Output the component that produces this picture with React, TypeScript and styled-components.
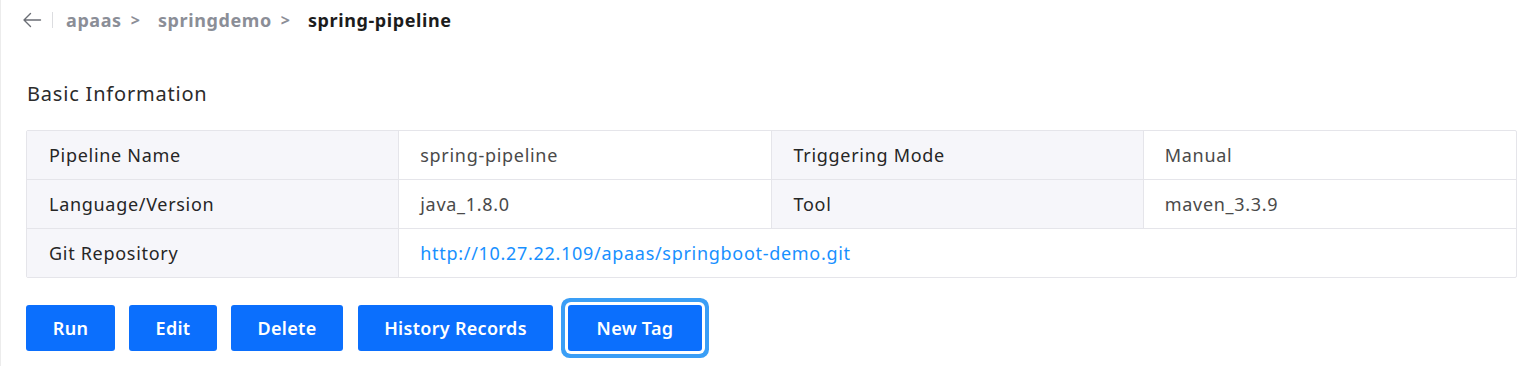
import styled, { createGlobalStyle } from 'styled-components';

const GlobalStyle = createGlobalStyle`
  html, body {
    margin: 0;
    padding: 0;
    background: #fff;
  }
  body {
    font-family: "Noto Sans", "Open Sans", sans-serif;
  }
`

type Row = {
  label: string;
  value: string;
  label2?: string;
  value2?: string;
  link?: boolean;
}

const rows: Row[] = [
  { label: 'Pipeline Name', value: 'spring-pipeline', label2: 'Triggering Mode', value2: 'Manual' },
  { label: 'Language/Version', value: 'java_1.8.0', label2: 'Tool', value2: 'maven_3.3.9' },
  { label: 'Git Repository', value: 'http://10.27.22.109/apaas/springboot-demo.git', link: true },
]

const buttons = [
  { text: 'Run', width: 89 },
  { text: 'Edit', width: 88 },
  { text: 'Delete', width: 112 },
  { text: 'History Records', width: 195, shift: 1 },
  { text: 'New Tag', width: 134, shift: 1, focused: true },
]

export default function App() {
  return (
    <Page>
      <GlobalStyle />
      <Crumbs>
        <BackButton aria-label="back">
          <svg width="20" height="16" viewBox="0 0 20 16" fill="none">
            <path d="M18.5 8H2M8.5 1.5L2 8L8.5 14.5" stroke="#6b6e75" strokeWidth="1.4" strokeLinecap="round" strokeLinejoin="round" />
          </svg>
        </BackButton>
        <Divider />
        <Crumb>apaas</Crumb>
        <Chevron>&gt;</Chevron>
        <Crumb>springdemo</Crumb>
        <Chevron>&gt;</Chevron>
        <Crumb $current>spring-pipeline</Crumb>
      </Crumbs>

      <SectionTitle>Basic Information</SectionTitle>

      <InfoTable>
        {rows.map((r, i) => (
          <InfoRow key={r.label} $last={i === rows.length - 1}>
            <LabelCell>{r.label}</LabelCell>
            {r.label2 ? (
              <>
                <ValueCell>{r.value}</ValueCell>
                <LabelCell>{r.label2}</LabelCell>
                <ValueCell $end>{r.value2}</ValueCell>
              </>
            ) : (
              <ValueCell $span={3} $end $link={r.link}>{r.value}</ValueCell>
            )}
          </InfoRow>
        ))}
      </InfoTable>

      <Actions>
        {buttons.map(b => (
          <ActionButton key={b.text} $width={b.width} $shift={b.shift} $focused={b.focused}>{b.text}</ActionButton>
        ))}
      </Actions>
    </Page>
  )
}

const Page = styled.div`
  box-sizing: border-box;
  height: 366px;
  border-left: 1px solid #ececec;
  padding: 0 11px 0 25px;
  color: #262626;
`

const Crumbs = styled.nav`
  display: flex;
  align-items: center;
  height: 40px;
  margin-left: -5px;
`

const BackButton = styled.button`
  display: flex;
  align-items: center;
  justify-content: center;
  border: none;
  background: transparent;
  padding: 0;
  width: 22px;
  height: 22px;
`

const Divider = styled.span`
  width: 1px;
  height: 16px;
  background: #dcdde0;
  margin: 0 13px 0 9px;
`

const Crumb = styled.span<{ $current?: boolean }>`
  font-size: 18px;
  font-weight: 700;
  letter-spacing: 0.6px;
  color: ${p => (p.$current ? '#1c1c1c' : '#8b8e97')};
`

const Chevron = styled.span`
  font-size: 16px;
  font-weight: 700;
  color: #8b8e97;
  margin: 0 18px 0 9px;
`

const SectionTitle = styled.h2`
  margin: 39px 0 0 1px;
  height: 30px;
  line-height: 30px;
  font-size: 20px;
  font-weight: 400;
  letter-spacing: 0.8px;
  color: #2b2b2b;
`

const InfoTable = styled.div`
  margin-top: 21px;
  border: 1px solid #e5e5ea;
  border-radius: 2px;
`

const InfoRow = styled.div<{ $last?: boolean }>`
  display: grid;
  grid-template-columns: repeat(4, 1fr);
  height: 48px;
  border-bottom: ${p => (p.$last ? 'none' : '1px solid #e5e5ea')};
`

const LabelCell = styled.div`
  display: flex;
  align-items: center;
  padding-left: 22px;
  background: #f6f6fa;
  border-right: 1px solid #e5e5ea;
  font-size: 18px;
  letter-spacing: 0.7px;
  color: #262626;
`

const ValueCell = styled.div<{ $span?: number; $end?: boolean; $link?: boolean }>`
  display: flex;
  align-items: center;
  padding-left: 21px;
  grid-column: span ${p => p.$span ?? 1};
  border-right: ${p => (p.$end ? 'none' : '1px solid #e5e5ea')};
  font-size: 18px;
  letter-spacing: 0.7px;
  color: ${p => (p.$link ? '#1890ff' : '#4a4a4a')};
`

const Actions = styled.div`
  display: flex;
  gap: 14px;
  margin-top: 27px;
`

const ActionButton = styled.button<{ $width: number; $shift?: number; $focused?: boolean }>`
  width: ${p => p.$width}px;
  height: 46px;
  border: none;
  border-radius: 3px;
  background: #0b6ffd;
  color: #fff;
  font-family: "Noto Sans", "Open Sans", sans-serif;
  font-size: 18px;
  font-weight: 600;
  letter-spacing: 0.3px;
  padding: 0;
  margin-left: ${p => p.$shift ?? 0}px;
  box-shadow: ${p => (p.$focused ? '0 0 0 3px #fff, 0 0 0 7px #3a9ef6' : 'none')};
`
